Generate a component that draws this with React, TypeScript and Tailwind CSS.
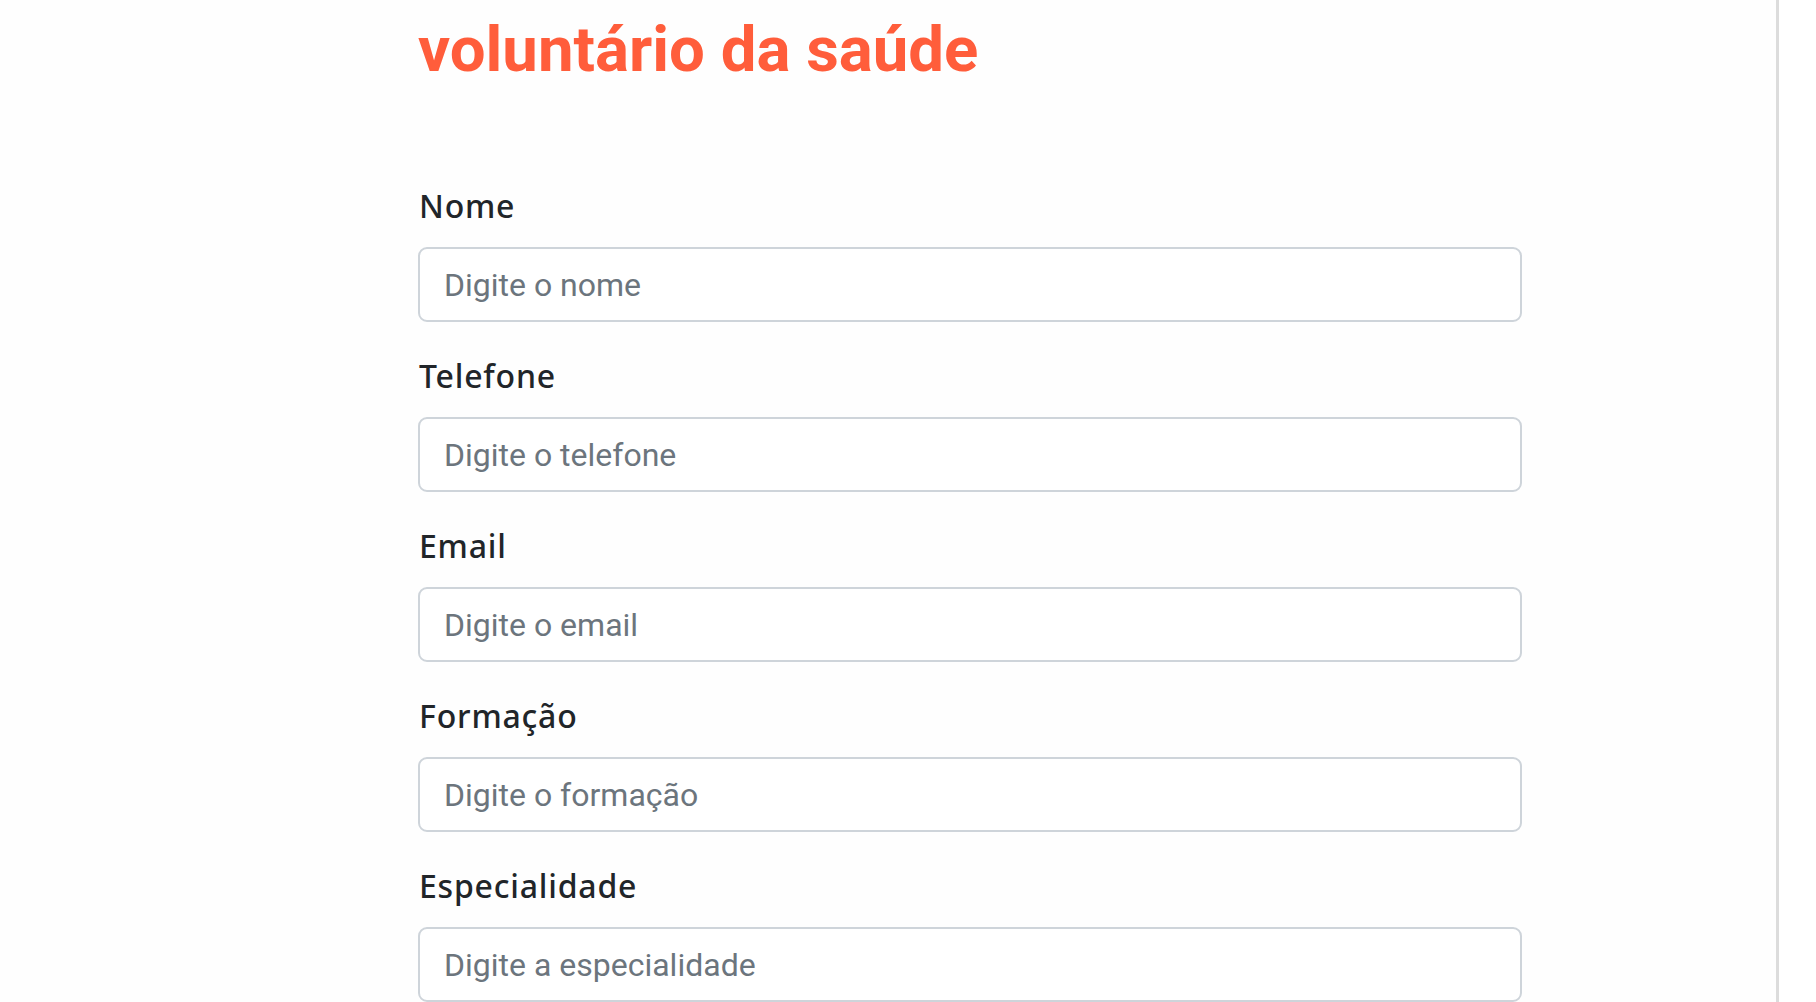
import React from "react";

const fields = [
  { label: "Nome", placeholder: "Digite o nome" },
  { label: "Telefone", placeholder: "Digite o telefone" },
  { label: "Email", placeholder: "Digite o email" },
  { label: "Formação", placeholder: "Digite o formação" },
  { label: "Especialidade", placeholder: "Digite a especialidade" },
];

export default function App() {
  return (
    <div className="flex h-[1002px] w-full overflow-hidden bg-white">
      <div className="w-[1776px] shrink-0 bg-[#fefefe]">
        <div className="ml-[418px] w-[1104px] pt-[11px]">
          <h1 className="m-0 font-['Roboto',sans-serif] text-[63.5px] font-bold leading-[77px] text-[#ff5d3b]">
            voluntário da saúde
          </h1>
          <form className="mt-[98px] flex flex-col gap-[34px]">
            {fields.map((f) => (
              <div key={f.label} className="flex flex-col gap-[21px]">
                <label className="pl-[1px] font-['Noto_Sans',sans-serif] text-[32px] font-medium leading-[40px] tracking-[0.025em] text-[#212529]">
                  {f.label}
                </label>
                <input
                  type="text"
                  placeholder={f.placeholder}
                  className="h-[75px] w-full rounded-[9px] border-2 border-[#ced4da] bg-white pl-[24px] pr-[25px] font-['Roboto',sans-serif] text-[32px] text-[#212529] outline-none placeholder:text-[#6c757d]"
                />
              </div>
            ))}
          </form>
        </div>
      </div>
      <div className="h-full w-[3px] shrink-0 bg-[#dcdcdc]" />
      <div className="flex-1 bg-white" />
    </div>
  );
}
